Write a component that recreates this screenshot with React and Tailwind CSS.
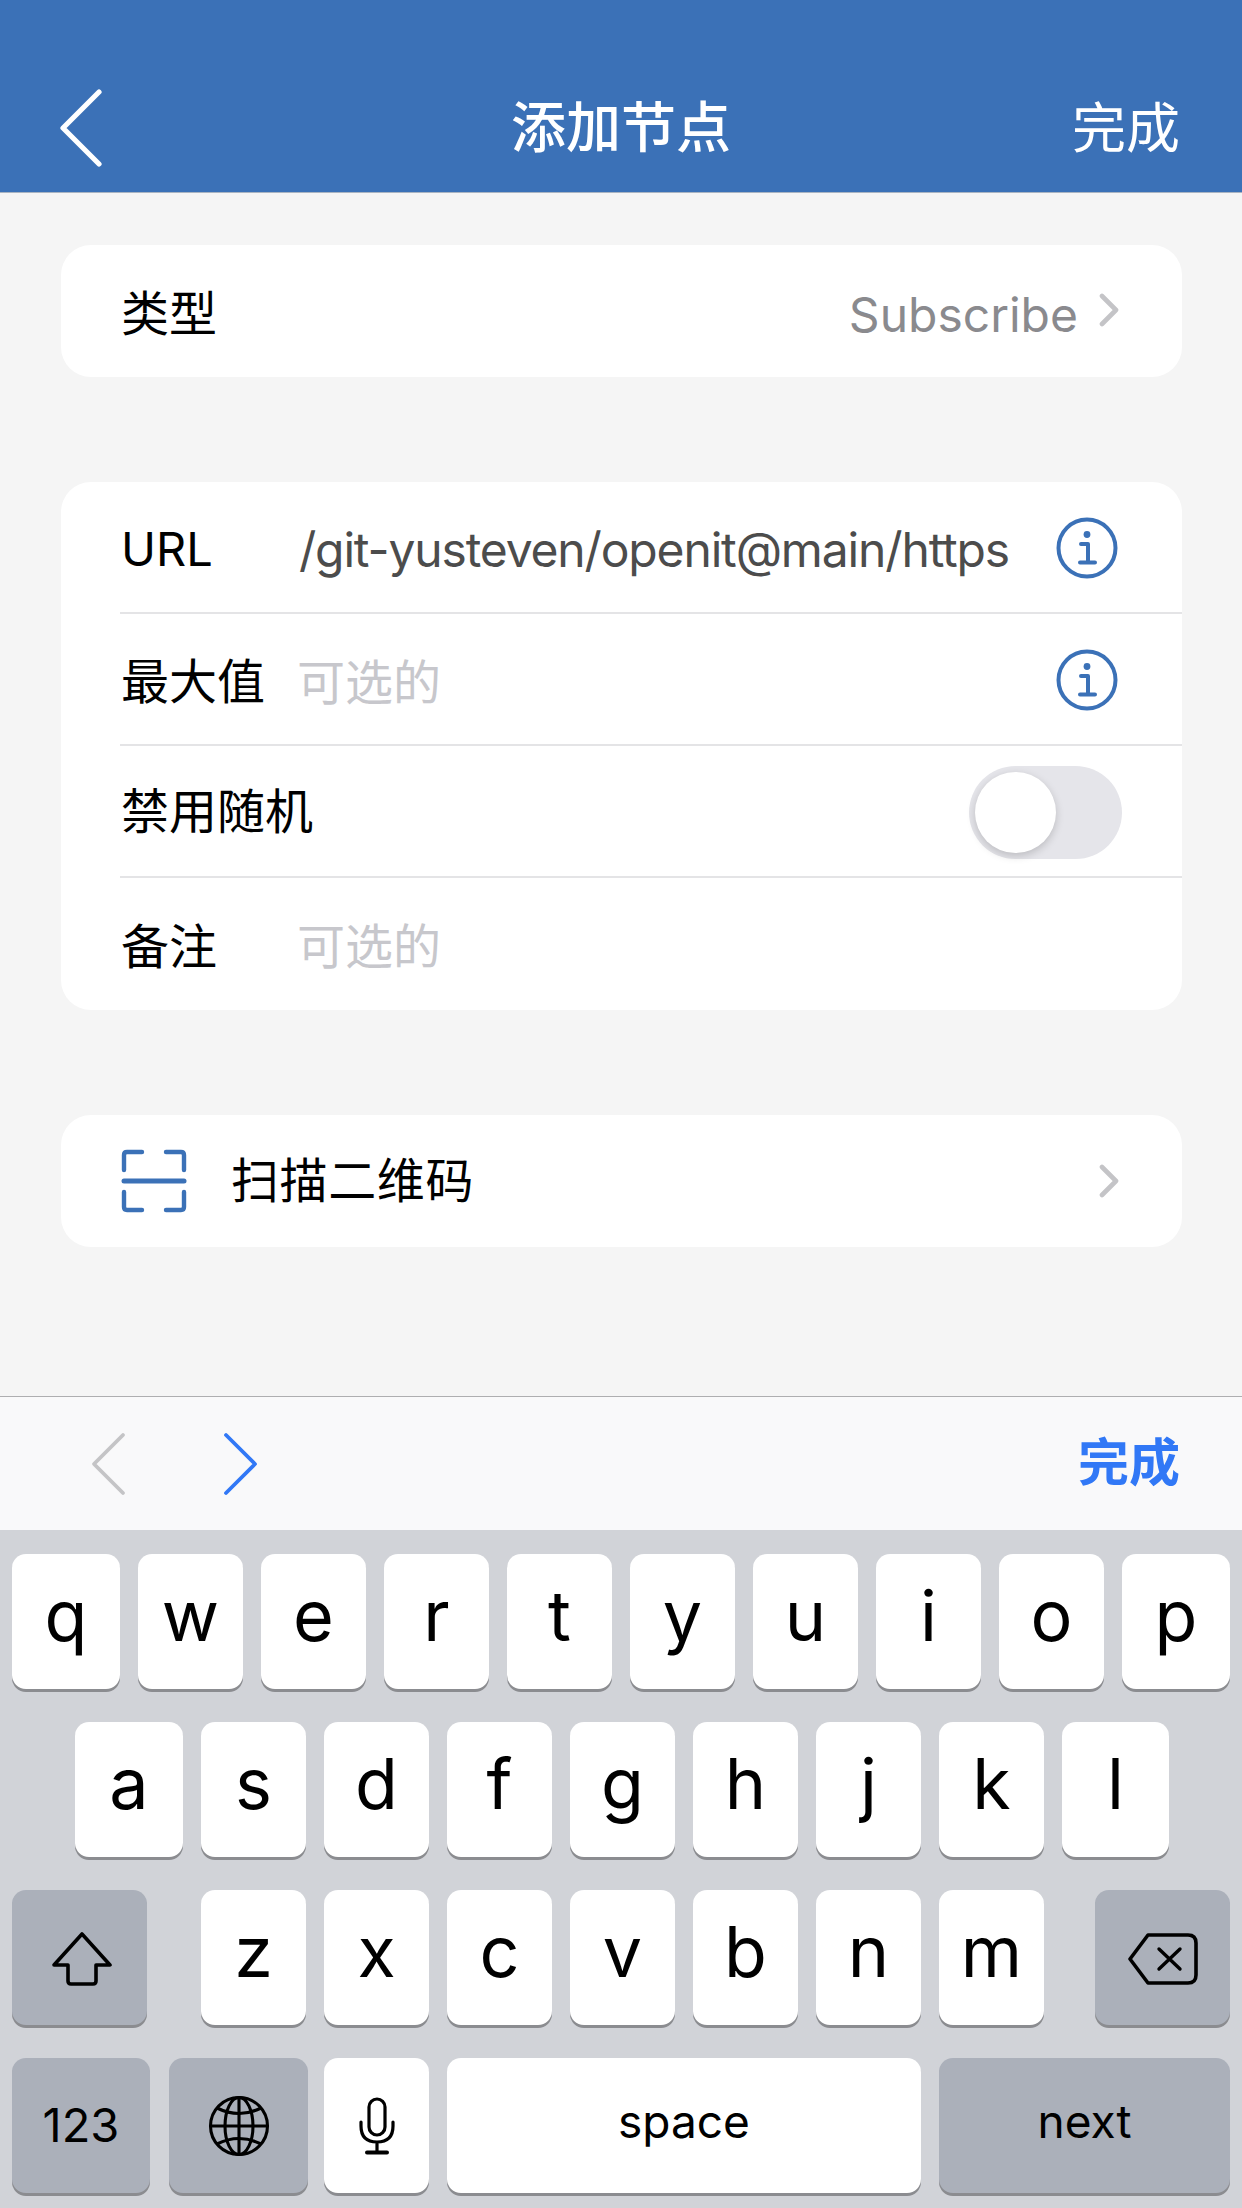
const Chevron = ({ className = "", dir = "right", w = 20, h = 34, sw = 4.6, color = "#c4c4c7" }) => (
  <svg width={w} height={h} viewBox={`0 0 ${w} ${h}`} className={"shrink-0 " + className} fill="none">
    <path
      d={dir === "right" ? `M3 3 L${w - 3} ${h / 2} L3 ${h - 3}` : `M${w - 3} 3 L3 ${h / 2} L${w - 3} ${h - 3}`}
      stroke={color}
      strokeWidth={sw}
      strokeLinecap="round"
      strokeLinejoin="round"
    />
  </svg>
);

const InfoIcon = () => (
  <svg width="62" height="62" viewBox="0 0 62 62" fill="none" className="shrink-0">
    <circle cx="31" cy="31" r="28.5" stroke="#3b71b7" strokeWidth="4" />
    <circle cx="31" cy="17.5" r="3.4" fill="#3b71b7" />
    <path d="M25 27 H32 V45 M24 45.5 H39" stroke="#3b71b7" strokeWidth="4" strokeLinecap="round" strokeLinejoin="round" />
  </svg>
);

const ScanIcon = () => (
  <svg width="66" height="64" viewBox="0 0 66 64" fill="none" className="shrink-0">
    <g stroke="#3b71b7" strokeWidth="4.4" strokeLinecap="round" strokeLinejoin="round">
      <path d="M21 3 H6 Q3 3 3 6 V21" />
      <path d="M45 3 H60 Q63 3 63 6 V21" />
      <path d="M3 43 V58 Q3 61 6 61 H21" />
      <path d="M63 43 V58 Q63 61 60 61 H45" />
    </g>
    <path d="M3 32 H63" stroke="#3b71b7" strokeWidth="5" strokeLinecap="round" />
  </svg>
);

const ShiftIcon = () => (
  <svg width="60" height="54" viewBox="0 0 60 54" fill="none" className="ml-[4px] mt-[3px]">
    <path
      d="M30 2 L58 33 H44 V49 Q44 52 41 52 H19 Q16 52 16 49 V33 H2 Z"
      stroke="#000"
      strokeWidth="3.6"
      strokeLinejoin="round"
    />
  </svg>
);

const BackspaceIcon = () => (
  <svg width="70" height="52" viewBox="0 0 70 52" fill="none" className="mt-[3px]">
    <path
      d="M20 2 H60 Q68 2 68 10 V42 Q68 50 60 50 H20 L2 26 Z"
      stroke="#000"
      strokeWidth="3.6"
      strokeLinejoin="round"
    />
    <path d="M31 16 L52 36 M52 16 L31 36" stroke="#000" strokeWidth="3.4" strokeLinecap="round" />
  </svg>
);

const GlobeIcon = () => (
  <svg width="62" height="62" viewBox="0 0 62 62" fill="none" className="mt-[1px]">
    <g stroke="#000" strokeWidth="3.1">
      <circle cx="31" cy="31" r="28.5" />
      <ellipse cx="31" cy="31" rx="14" ry="28.5" />
      <path d="M31 2.5 V59.5 M2.5 31 H59.5" />
      <path d="M9 13 Q31 24 53 13 M9 49 Q31 38 53 49" />
    </g>
  </svg>
);

const MicIcon = () => (
  <svg width="36" height="58" viewBox="0 0 36 58" fill="none" className="mt-[1px]">
    <rect x="10" y="2" width="16" height="36" rx="8" stroke="#000" strokeWidth="3.2" />
    <path d="M2 25 V29 Q2 45 18 45 Q34 45 34 29 V25 M18 45 V55" stroke="#000" strokeWidth="3.2" strokeLinecap="round" />
    <path d="M8 55.5 H28" stroke="#000" strokeWidth="4" strokeLinecap="round" />
  </svg>
);

const Key = ({ w, gray, children, text = "text-[70px] pb-[13px]" }) => (
  <div
    className={
      "h-[135px] shrink-0 rounded-[14px] flex items-center justify-center text-black shadow-[0_3px_0_#8b8c90] " +
      w + " " + text + " " + (gray ? "bg-[#abb0ba]" : "bg-white")
    }
  >
    {children}
  </div>
);

const Sep = () => <div className="absolute left-[59px] right-0 bottom-0 h-[2px] bg-[#e4e4e6]" />;

const Placeholder = ({ className = "" }) => (
  <div className={"text-[48px] text-[#c7c7cc] " + className}>可选的</div>
);

export default function App() {
  const row1 = ["q", "w", "e", "r", "t", "y", "u", "i", "o", "p"];
  const row2 = ["a", "s", "d", "f", "g", "h", "j", "k", "l"];
  const row3 = ["z", "x", "c", "v", "b", "n", "m"];
  return (
    <div className="w-[1242px] h-[2208px] flex flex-col overflow-hidden bg-[#f5f5f5] font-['Inter','Noto_Sans_CJK_SC',sans-serif]" lang="zh-CN">
      {/* Header */}
      <header className="h-[193px] shrink-0 bg-[#3b71b7] border-b border-[#a9b4c2] pt-[60px] pl-[60px] pr-[60px] flex items-center text-white">
        <div className="flex-1 flex pt-[3px]">
          <Chevron dir="left" w={42} h={78} sw={5.2} color="#fff" />
        </div>
        <div className="text-[55px] font-medium pt-[2px] ml-[2px]">添加节点</div>
        <div className="flex-1 flex justify-end text-[54px] pr-[2px] pt-[5px]">完成</div>
      </header>

      {/* Content */}
      <main className="flex-1 px-[61px] pt-[52px] flex flex-col gap-[105px]">
        <section className="h-[132px] bg-white rounded-[30px] flex items-center pl-[60px] pr-[63px] w-[1121px]">
          <div className="text-[48px] text-black pt-[6px]">类型</div>
          <div className="flex-1" />
          <div className="text-[48px] text-[#8a8a8e] mr-[21px] pt-[8px]">Subscribe</div>
          <Chevron className="mb-[2px]" />
        </section>

        <section className="bg-white rounded-[30px] w-[1121px] overflow-hidden">
          <div className="h-[132px] pl-[60px] pr-[64px] flex items-center relative">
            <div className="w-[178px] shrink-0 text-[47px] text-black pt-[3px]">URL</div>
            <div className="w-[710px] overflow-hidden flex justify-end whitespace-nowrap text-[48px] tracking-[-1.15px] text-[#4c4c4c] pt-[3px]">
              <span className="shrink-0">/git-yusteven/openit@main/https</span>
            </div>
            <div className="flex-1" />
            <InfoIcon />
            <Sep />
          </div>
          <div className="h-[132px] pl-[60px] pr-[64px] flex items-center relative">
            <div className="w-[176px] shrink-0 text-[48px] text-black pt-[3px]">最大值</div>
            <Placeholder className="pt-[6px]" />
            <div className="flex-1" />
            <InfoIcon />
            <Sep />
          </div>
          <div className="h-[132px] pl-[60px] pr-[60px] flex items-center relative">
            <div className="text-[48px] text-black">禁用随机</div>
            <div className="flex-1" />
            <div className="w-[153px] h-[93px] rounded-full bg-[#e5e5ea] flex items-center pl-[6px]">
              <div className="w-[81px] h-[81px] rounded-full bg-white shadow-[0_3px_8px_rgba(0,0,0,0.18)]" />
            </div>
            <Sep />
          </div>
          <div className="h-[132px] pl-[60px] pr-[64px] flex items-center">
            <div className="w-[176px] shrink-0 text-[48px] text-black pt-[6px]">备注</div>
            <Placeholder className="pt-[6px]" />
          </div>
        </section>

        <section className="h-[132px] bg-white rounded-[30px] w-[1121px] flex items-center pl-[60px] pr-[63px]">
          <ScanIcon />
          <div className="ml-[44px] text-[48px] tracking-[0.6px] text-black">扫描二维码</div>
          <div className="flex-1" />
          <Chevron />
        </section>
      </main>

      {/* Toolbar */}
      <div className="h-[134px] shrink-0 bg-[#f9f9fa] border-t border-[#aeaeb0] flex items-center pl-[91px] pr-[62px]">
        <Chevron dir="left" w={35} h={64} sw={3.8} color="#c4c4c6" className="mt-[1px]" />
        <div className="w-[97px]" />
        <Chevron w={35} h={64} sw={3.8} color="#3178f6" className="mt-[1px]" />
        <div className="flex-1" />
        <div className="text-[51px] font-semibold text-[#3178f6]">完成</div>
      </div>

      {/* Keyboard */}
      <div className="h-[678px] shrink-0 bg-[#d1d3d8] pt-[24px] flex flex-col gap-[33px]">
        <div className="flex gap-[18px] px-[12px]">
          {row1.map((k, i) => (
            <Key key={k} w={i === 0 || i === 9 ? "w-[108px]" : "w-[105px]"}>{k}</Key>
          ))}
        </div>
        <div className="flex gap-[18px] pl-[75px]">
          {row2.map((k, i) => (
            <Key key={k} w={i === 0 ? "w-[108px]" : i === 8 ? "w-[107px]" : "w-[105px]"}>{k}</Key>
          ))}
        </div>
        <div className="flex gap-[18px] px-[12px]">
          <Key w="w-[135px] mr-[36px]" gray text=""><ShiftIcon /></Key>
          {row3.map((k) => (
            <Key key={k} w="w-[105px]">{k}</Key>
          ))}
          <Key w="w-[135px] ml-[33px]" gray text=""><BackspaceIcon /></Key>
        </div>
        <div className="flex gap-[18px] px-[12px]">
          <Key w="w-[138px]" gray text="text-[47px]">123</Key>
          <Key w="w-[139px] ml-[1px]" gray text=""><GlobeIcon /></Key>
          <Key w="w-[105px] -ml-[2px]" text=""><MicIcon /></Key>
          <Key w="w-[474px]" text="text-[46px] pb-[8px]">space</Key>
          <Key w="w-[291px]" gray text="text-[46px] pb-[8px]">next</Key>
        </div>
      </div>
    </div>
  );
}
